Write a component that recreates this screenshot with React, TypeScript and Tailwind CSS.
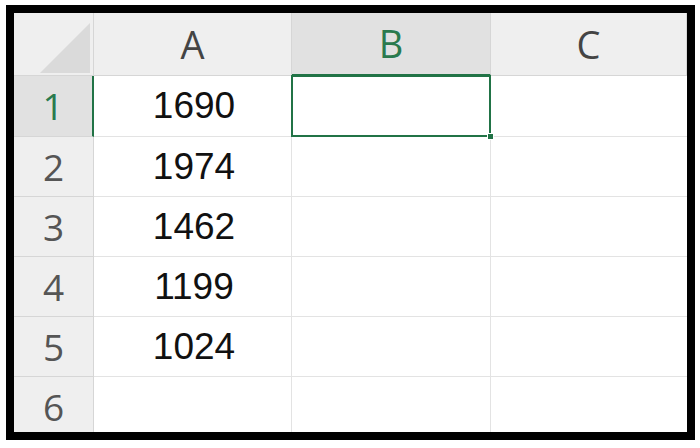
const rows = [
  { n: 1, a: '1690' },
  { n: 2, a: '1974' },
  { n: 3, a: '1462' },
  { n: 4, a: '1199' },
  { n: 5, a: '1024' },
  { n: 6, a: '' },
];

const headFont = { fontFamily: '"Open Sans", "Noto Sans", sans-serif' };

export default function App() {
  return (
    <div className="w-[700px] h-[448px] bg-white overflow-hidden pt-[5px] pl-[6px]">
      <div className="relative w-[689px] h-[435px] border-[8px] border-black bg-white overflow-hidden">
        <div className="grid grid-cols-[80px_198px_199px_1fr] grid-rows-[63px_61px_60px_60px_60px_60px_60px]">
          {/* corner */}
          <div className="bg-[#efefef] border-r border-b border-[#d6d6d6] relative">
            <svg className="absolute left-[26px] top-[10px]" width="50" height="50" viewBox="0 0 50 50">
              <polygon points="0,50 50,50 50,0" fill="#dadada" />
            </svg>
          </div>
          {['A', 'B', 'C'].map((c) => (
            <div
              key={c}
              style={headFont}
              className={
                c === 'B'
                  ? 'bg-[#e1e1e1] border-r border-[#d6d6d6] border-b-2 border-b-[#217346] flex items-center justify-center text-[38px] text-[#2a7a4e]'
                  : 'bg-[#efefef] border-r border-b border-[#d6d6d6] flex items-center justify-center text-[38px] text-[#444]'
              }
            >
              {c}
            </div>
          ))}

          {rows.map((r) => (
            <div key={r.n} className="contents">
              <div
                style={headFont}
                className={
                  r.n === 1
                    ? 'bg-[#e1e1e1] border-b border-[#d6d6d6] border-r-2 border-r-[#217346] flex items-center justify-center text-[37px] text-[#2a7a4e]'
                    : 'bg-[#efefef] border-r border-b border-[#d6d6d6] flex items-center justify-center text-[37px] text-[#555]'
                }
              >
                {r.n}
              </div>
              <div
                className="border-r border-b border-[#e3e3e3] flex items-center justify-center text-[37px] text-[#111] pl-[3px]"
                style={{ fontFamily: '"Liberation Sans", Arial, sans-serif' }}
              >
                {r.a}
              </div>
              <div className="border-r border-b border-[#e3e3e3]" />
              <div className="border-b border-[#e3e3e3]" />
            </div>
          ))}
        </div>

        {/* selected cell B1 */}
        <div className="absolute left-[277px] top-[62px] w-[200px] h-[62px] border-2 border-[#217346]" />
        <div className="absolute left-[473px] top-[120px] w-[7px] h-[7px] bg-[#217346] border border-white" />
      </div>
    </div>
  );
}
